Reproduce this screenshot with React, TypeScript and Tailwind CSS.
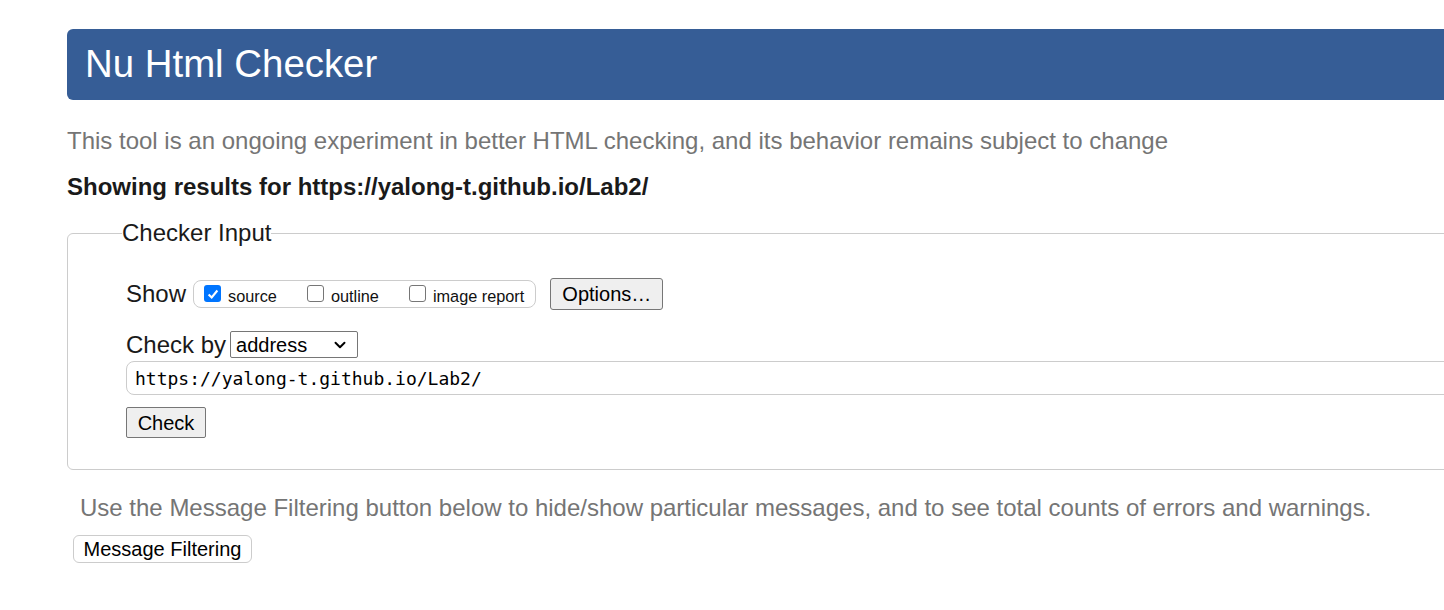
import { ChevronDown } from 'lucide-react';

function Box({ checked }: { checked?: boolean }) {
  if (checked) {
    return (
      <span className="flex h-[17px] w-[17px] shrink-0 items-center justify-center rounded-[3px] bg-[#0075ff]">
        <svg viewBox="0 0 16 16" className="h-[14px] w-[14px]">
          <path d="M3 8.5 L6.5 12 L13 4" fill="none" stroke="#fff" strokeWidth="2.4" />
        </svg>
      </span>
    );
  }
  return <span className="h-[17px] w-[17px] shrink-0 rounded-[3px] border border-[#767676] bg-white" />;
}

function Option({ label, checked }: { label: string; checked?: boolean }) {
  return (
    <label className="flex items-center gap-[7px] text-[16.3px] leading-none text-[#111]">
      <Box checked={checked} />
      <span className="mt-[4px]">{label}</span>
    </label>
  );
}

export default function App() {
  return (
    <div className="h-[610px] w-[1444px] overflow-hidden bg-white font-['Liberation_Sans',Arial,sans-serif]">
      <div className="w-[1500px] pl-[67px] pt-[29px]">
        <header className="flex h-[71px] items-center rounded-[6px] bg-[#365d96] pl-[18px]">
          <h1 className="text-[38.4px] leading-none text-white">Nu Html Checker</h1>
        </header>

        <p className="mt-[27px] text-[24px] leading-[28px] text-[#757575]">
          This tool is an ongoing experiment in better HTML checking, and its behavior remains subject to change
        </p>
        <p className="mt-[18px] text-[24px] font-bold leading-[28px] text-[#1a1a1a]">
          Showing results for https://yalong-t.github.io/Lab2/
        </p>

        <fieldset className="mt-[18px] rounded-[6px] border border-[#cccccc] pb-[31px] pl-[58px]">
          <legend className="-ml-[4px] text-[24px] leading-[28px] text-[#1a1a1a]">Checker Input</legend>

          <div className="mt-[31px] flex h-[32px] items-center">
            <span className="text-[24px] leading-none text-[#1a1a1a]">Show</span>
            <div className="ml-[7px] flex h-[28px] items-center gap-[30px] rounded-[8px] border border-[#cccccc] pl-[10px] pr-[11px]">
              <Option label="source" checked />
              <Option label="outline" />
              <Option label="image report" />
            </div>
            <button className="ml-[14px] flex h-[32px] w-[113px] items-center justify-center rounded-[3px] border border-[#767676] bg-[#efefef] text-[20px] text-black">
              Options…
            </button>
          </div>

          <div className="mt-[21px] flex h-[27px] items-center">
            <span className="text-[24px] leading-none text-[#1a1a1a]">Check by</span>
            <div className="ml-[4px] flex h-[27px] w-[128px] items-center justify-between rounded-[2px] border border-[#767676] bg-white pl-[5px] pr-[8px] text-[20px] text-black">
              <span>address</span>
              <ChevronDown size={18} strokeWidth={2.6} className="text-black" />
            </div>
          </div>

          <div className="mt-[3px] flex h-[34px] w-[1400px] items-center rounded-[8px] border border-[#cccccc] pl-[8px] font-['DejaVu_Sans_Mono',monospace] text-[18px] text-black">
            https://yalong-t.github.io/Lab2/
          </div>

          <button className="mt-[12px] flex h-[31px] w-[80px] items-center justify-center rounded-[2px] border border-[#767676] bg-[#efefef] text-[20px] text-black">
            Check
          </button>
        </fieldset>

        <p className="ml-[13px] mt-[24px] text-[24px] leading-[28px] text-[#757575]">
          Use the Message Filtering button below to hide/show particular messages, and to see total counts of errors and warnings.
        </p>
        <button className="ml-[6px] mt-[13px] flex h-[28px] w-[179px] items-center justify-center rounded-[6px] border border-[#cccccc] bg-white text-[20px] text-black">
          Message Filtering
        </button>
      </div>
    </div>
  );
}
